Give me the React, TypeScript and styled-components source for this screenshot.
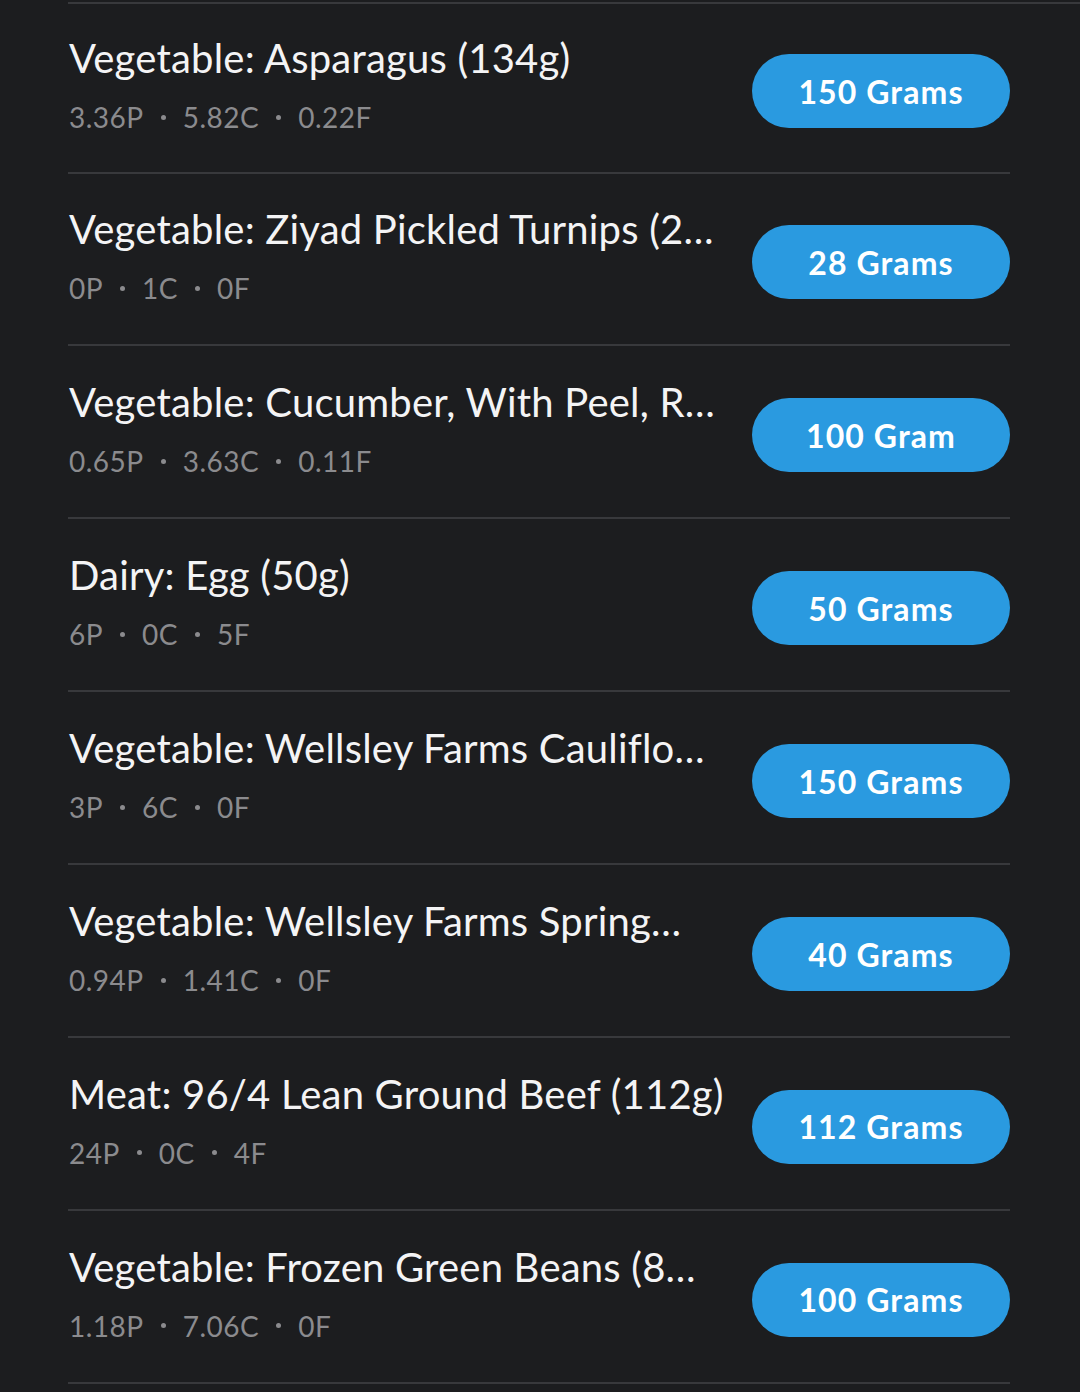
import React from "react";
import styled, { createGlobalStyle } from "styled-components";

const Global = createGlobalStyle`
  html, body { margin: 0; padding: 0; background: #1c1d1f; }
  body { font-family: Lato, "Open Sans", sans-serif; -webkit-font-smoothing: antialiased; }
`;

const Page = styled.div`
  width: 1080px;
  height: 1392px;
  background: #1c1d1f;
  overflow: hidden;
  padding-top: 2px;
  box-sizing: border-box;
`;

const TopRule = styled.div`
  margin-left: 68px;
  height: 2px;
  background: #38393c;
`;

const List = styled.div`
  margin-left: 68px;
  width: 942px;
  display: flex;
  flex-direction: column;
`;

const Row = styled.div`
  height: 172.9px;
  box-sizing: border-box;
  border-bottom: 2px solid #38393c;
  display: flex;
  align-items: center;
  justify-content: space-between;
  gap: 30px;

  &:first-child {
    height: 169.5px;
  }
`;

const Info = styled.div`
  flex: 1;
  min-width: 0;
  display: flex;
  flex-direction: column;
  gap: 17px;
  padding-left: 1px;
  padding-bottom: 6px;
`;

const Title = styled.div`
  color: #f4f4f5;
  font-size: 40px;
  letter-spacing: 0.2px;
  line-height: 48px;
  font-weight: 400;
  white-space: nowrap;
`;

const Macros = styled.div`
  display: flex;
  align-items: center;
  color: #8b8b8e;
  font-size: 28px;
  letter-spacing: 0.5px;
  line-height: 36px;
`;

const Dot = styled.span`
  width: 5px;
  height: 5px;
  border-radius: 50%;
  background: #8b8b8e;
  margin: 0 17px;
`;

const AmountButton = styled.button`
  flex: none;
  width: 258px;
  height: 74px;
  margin-top: 7px;
  border: none;
  border-radius: 37px;
  background: #2a9ae0;
  color: #ffffff;
  font-family: Lato, "Open Sans", sans-serif;
  font-weight: 700;
  font-size: 32px;
  letter-spacing: 1.1px;
  padding: 0;
  cursor: pointer;
`;

const items = [
  { name: "Vegetable: Asparagus (134g)", m: ["3.36P", "5.82C", "0.22F"], amt: "150 Grams" },
  { name: "Vegetable: Ziyad Pickled Turnips (2…", m: ["0P", "1C", "0F"], amt: "28 Grams" },
  { name: "Vegetable: Cucumber, With Peel, R…", m: ["0.65P", "3.63C", "0.11F"], amt: "100 Gram" },
  { name: "Dairy: Egg (50g)", m: ["6P", "0C", "5F"], amt: "50 Grams" },
  { name: "Vegetable: Wellsley Farms Cauliflo…", m: ["3P", "6C", "0F"], amt: "150 Grams" },
  { name: "Vegetable: Wellsley Farms Spring…", m: ["0.94P", "1.41C", "0F"], amt: "40 Grams" },
  { name: "Meat: 96/4 Lean Ground Beef (112g)", m: ["24P", "0C", "4F"], amt: "112 Grams" },
  { name: "Vegetable: Frozen Green Beans (8…", m: ["1.18P", "7.06C", "0F"], amt: "100 Grams" },
];

export default function App() {
  return (
    <Page>
      <Global />
      <TopRule />
      <List>
        {items.map((it, i) => (
          <Row key={i}>
            <Info>
              <Title>{it.name}</Title>
              <Macros>
                {it.m.map((v, j) => (
                  <React.Fragment key={j}>
                    {j > 0 && <Dot />}
                    <span>{v}</span>
                  </React.Fragment>
                ))}
              </Macros>
            </Info>
            <AmountButton>{it.amt}</AmountButton>
          </Row>
        ))}
      </List>
    </Page>
  );
}
